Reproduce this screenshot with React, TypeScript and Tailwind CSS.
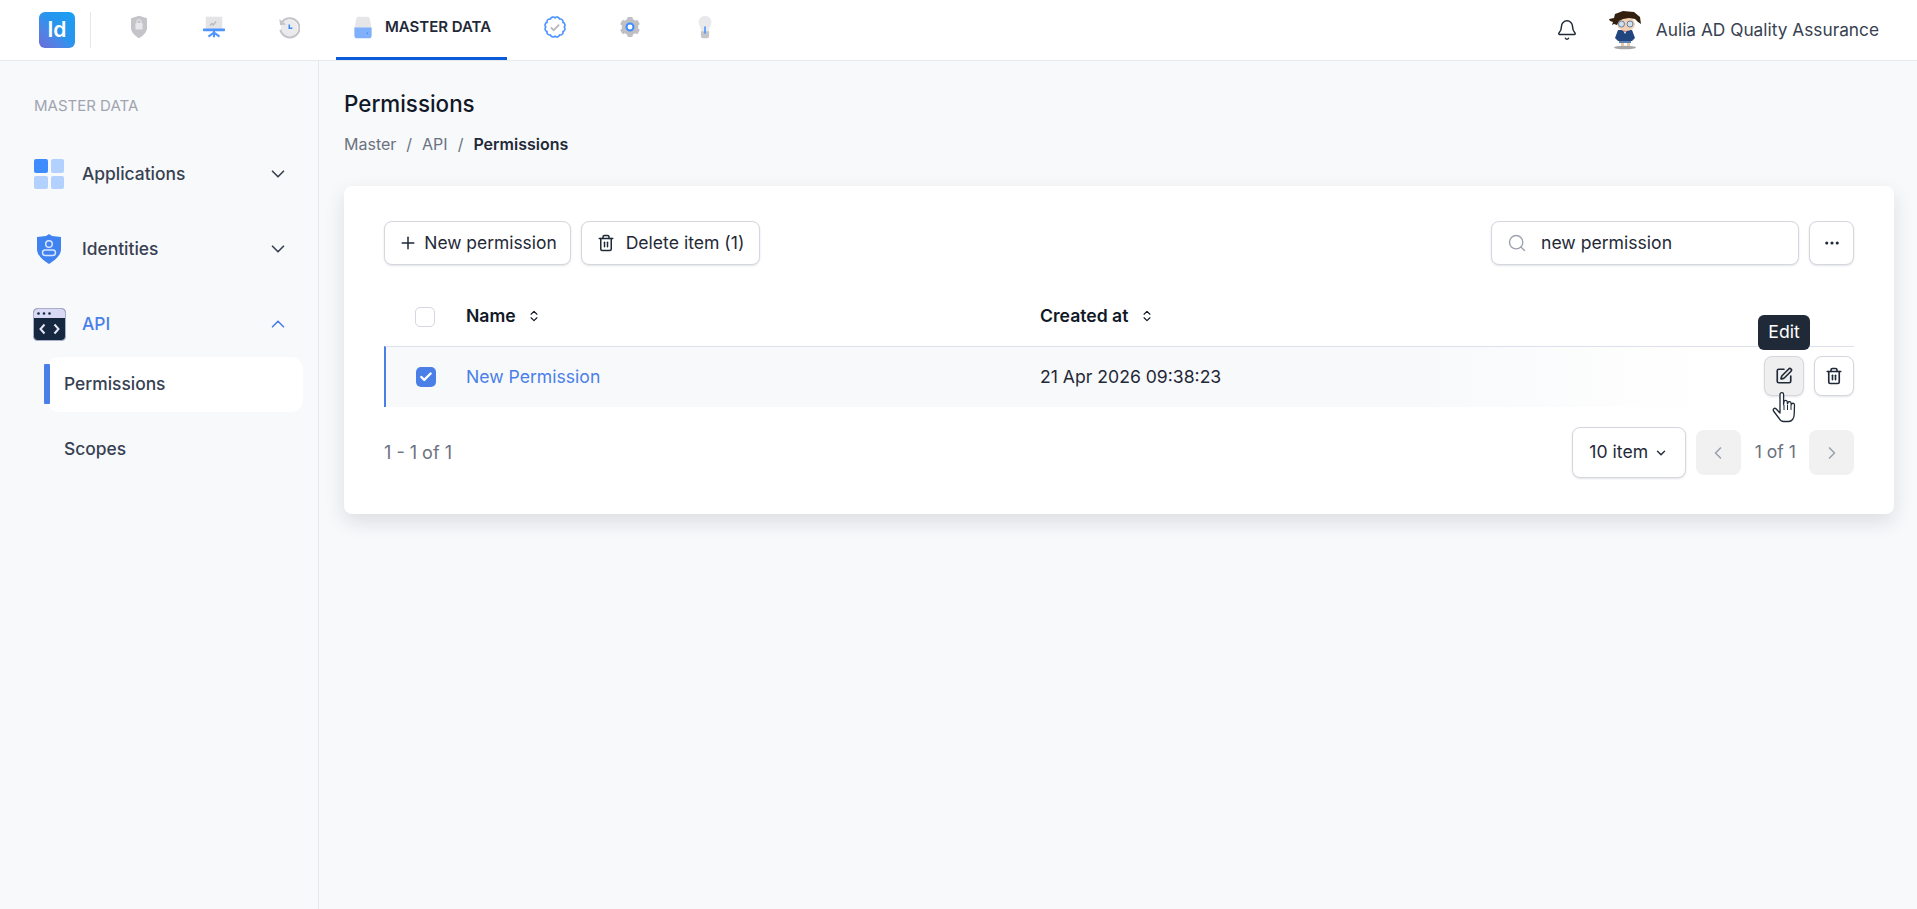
import { Bell, ChevronDown, ChevronLeft, ChevronRight, ChevronUp, ChevronsUpDown, Check, Ellipsis, Plus, Search, SquarePen, Trash2 } from "lucide-react";

function ShieldIcon() {
  return (
    <svg width="20" height="24" viewBox="0 0 24 30">
      <path d="M12 1 22 4v12c0 6-5 10-10 13C7 26 2 22 2 16V4z" fill="#c4c4c9" />
      <rect x="7.500" y="10" width="9" height="8" rx="1.500" fill="#e8e8ea" />
      <path d="M9.500 10V8.500a2.500 2.500 0 0 1 5 0V10" fill="none" stroke="#e8e8ea" strokeWidth="1.400" />
    </svg>
  );
}

function BoardIcon() {
  return (
    <svg width="22" height="22" viewBox="0 0 32 32">
      <rect x="4" y="1" width="24" height="18" fill="#e4e4e6" />
      <path d="M10 14l3-3 2 2 4-5" fill="none" stroke="#b9b9be" strokeWidth="2" />
      <rect x="0" y="18" width="32" height="4" rx="1" fill="#4c94ff" />
      <path d="M16 21v10M16 24l-8 6M16 24l8 6" stroke="#4c94ff" strokeWidth="3" fill="none" />
    </svg>
  );
}

function HistoryIcon() {
  return (
    <svg width="23" height="23" viewBox="0 0 30 30">
      <circle cx="16" cy="16" r="11" fill="#ebebed" />
      <path d="M6 9a12.500 12.500 0 1 1-1.500 9" fill="none" stroke="#c4c4c9" strokeWidth="2.800" />
      <path d="M3 4l1 8 8-1z" fill="#c4c4c9" />
      <path d="M16 11v5h4" fill="none" stroke="#3b87f5" strokeWidth="2" />
    </svg>
  );
}

function DriveIcon() {
  return (
    <svg width="22" height="23" viewBox="0 0 24 32">
      <path d="M6 1h12c2 0 3 1 3.500 3L24 18H0L2.500 4C3 2 4 1 6 1z" fill="#e6e6e8" />
      <path d="M0 16h24v11a4 4 0 0 1-4 4H4a4 4 0 0 1-4-4z" fill="#7fb0fb" />
      <circle cx="18" cy="24" r="1" fill="#3f7fe0" />
    </svg>
  );
}

function BadgeIcon() {
  return (
    <svg width="22" height="22" viewBox="0 0 24 24">
      <path d="M22 12A3 3 0 0 1 20.660 17A3 3 0 0 1 17 20.660A3 3 0 0 1 12 22A3 3 0 0 1 7 20.660A3 3 0 0 1 3.340 17A3 3 0 0 1 2 12A3 3 0 0 1 3.340 7A3 3 0 0 1 7 3.340A3 3 0 0 1 12 2A3 3 0 0 1 17 3.340A3 3 0 0 1 20.660 7A3 3 0 0 1 22 12z" fill="none" stroke="#4c94ff" strokeWidth="1.800" strokeLinejoin="round" />
      <path d="M7.500 12.500l3 3 6-6" fill="none" stroke="#b9b9be" strokeWidth="2" />
    </svg>
  );
}

function GearIcon() {
  return (
    <svg width="22" height="22" viewBox="0 0 24 24">
      <circle cx="12" cy="12" r="9" fill="#bfbfc4" />
      <rect x="9" y="1" width="6" height="22" rx="1.500" fill="#bfbfc4" />
      <rect x="9" y="1" width="6" height="22" rx="1.500" fill="#bfbfc4" transform="rotate(60 12 12)" />
      <rect x="9" y="1" width="6" height="22" rx="1.500" fill="#bfbfc4" transform="rotate(120 12 12)" />
      <circle cx="12" cy="12" r="3.800" fill="#fff" stroke="#3f8cff" strokeWidth="2.200" />
    </svg>
  );
}

function BulbIcon() {
  return (
    <svg width="18" height="24" viewBox="0 0 18 32">
      <path d="M9 1a8.500 8.500 0 0 1 8.500 8.500c0 4-3 6-3.500 12h-10C3.500 15.500.5 13.500.5 9.500A8.500 8.500 0 0 1 9 1z" fill="#e9e9eb" />
      <path d="M3.500 21.500h11V28a3 3 0 0 1-3 3h-5a3 3 0 0 1-3-3z" fill="#c4c4c9" />
      <rect x="8" y="15" width="2" height="10" rx="1" fill="#3f8cff" />
    </svg>
  );
}

function Avatar() {
  return (
    <svg width="36" height="40" viewBox="0 0 36 40">
      <ellipse cx="17" cy="37.500" rx="11" ry="1.800" fill="#a5a5a5" />
      <path d="M11 29h12v4H11z" fill="#5a7fae" />
      <rect x="13" y="33" width="3" height="3" fill="#e9c9a8" />
      <rect x="19" y="33" width="3" height="3" fill="#e9c9a8" />
      <path d="M10 20h14l3 8-3 3H10l-3-3z" fill="#21457f" />
      <path d="M15 20h4l-2 4z" fill="#fff" />
      <rect x="15.500" y="20" width="3" height="1.600" fill="#c22f2f" />
      <ellipse cx="18" cy="14" rx="9" ry="7" fill="#f3d2b3" />
      <circle cx="13.500" cy="14" r="3" fill="#cfe1ee" stroke="#4a6a8e" strokeWidth="0.800" />
      <circle cx="22" cy="14" r="3" fill="#cfe1ee" stroke="#4a6a8e" strokeWidth="0.800" />
      <path d="M1 9l5-1 1-4 8-3 11 1 6 5 1 7-3-2-3-3-6-1-6 1-4 2-2 4-3-1-2 1 1-3-3-1z" fill="#33200f" />
    </svg>
  );
}

function AppsIcon() {
  return (
    <div className="grid grid-cols-2 gap-[3px] w-[30px] h-[30px] shrink-0">
      <div className="rounded-[2px] bg-[#3f8cff]" />
      <div className="rounded-[2px] bg-[#b3d1fe]" />
      <div className="rounded-[2px] bg-[#b3d1fe]" />
      <div className="rounded-[2px] bg-[#b3d1fe]" />
    </div>
  );
}

function IdentityIcon() {
  return (
    <svg width="30" height="30" viewBox="0 0 30 30" className="shrink-0">
      <path d="M15 0l3 2 9 1v12c0 7-7 12-12 15C10 27 3 22 3 15V3l9-1z" fill="#3f82f0" />
      <circle cx="15" cy="10" r="3.300" fill="none" stroke="#d6e6ff" strokeWidth="1.500" />
      <rect x="8.500" y="16" width="13" height="5.500" rx="2.700" fill="none" stroke="#d6e6ff" strokeWidth="1.500" />
    </svg>
  );
}

function ApiIcon() {
  return (
    <svg width="33" height="33" viewBox="0 0 33 33" className="shrink-0">
      <rect x="0.500" y="0.500" width="32" height="32" rx="4" fill="#16283f" stroke="#a9aecb" />
      <path d="M1 10V4.500A3.500 3.500 0 0 1 4.500 1h24A3.500 3.500 0 0 1 32 4.500V10z" fill="#d9d9f6" />
      <circle cx="5.500" cy="5.500" r="1.300" fill="#16283f" />
      <circle cx="11" cy="5.500" r="1.300" fill="#16283f" />
      <circle cx="16.500" cy="5.500" r="1.300" fill="#16283f" />
      <path d="M11.500 16.500l-4 4.500 4 4.500M21.500 16.500l4 4.500-4 4.500" fill="none" stroke="#e6e6f8" strokeWidth="2" />
    </svg>
  );
}

function HandCursor() {
  return (
    <svg width="24" height="32" viewBox="0 0 24 32">
      <path d="M8 2.500a1.800 1.800 0 0 1 3.600 0v10l.4-3a1.700 1.700 0 0 1 3.300.4l.2 2 .5-1.400a1.600 1.600 0 0 1 3 .6l.3 1.400.5-.6a1.500 1.500 0 0 1 2.700.8l-.3 9.800c0 4-2.500 7-5.500 7h-5c-2 0-3.500-1-4.500-3L1.500 19c-1-2 1-3.500 2.500-2.300L8 21z" fill="#fff" stroke="#1f2937" strokeWidth="1.300" strokeLinejoin="round" />
      <path d="M12 13v5M15.500 13v5M19 13v5" stroke="#1f2937" strokeWidth="1" />
    </svg>
  );
}

const navItems = [
  { key: "security", icon: <ShieldIcon /> },
  { key: "monitor", icon: <BoardIcon /> },
  { key: "history", icon: <HistoryIcon /> },
];

const navItemsRight = [
  { key: "approval", icon: <BadgeIcon /> },
  { key: "settings", icon: <GearIcon /> },
  { key: "ideas", icon: <BulbIcon /> },
];

const outlineButton = "flex items-center justify-center bg-white border border-[#d5d7e0] rounded-lg shadow-[0_1px_2px_rgba(16,24,40,0.12)] text-[#1f2937]";

export default function App() {
  return (
    <div className="h-[909px] overflow-hidden flex flex-col bg-[#f8f9fb] font-['Inter',sans-serif] text-[#1f2937]">
      <header className="h-[61px] shrink-0 flex items-center bg-white border-b border-[#e8e9ec]">
        <div className="ml-[39px] w-9 h-9 rounded-md bg-gradient-to-tr from-[#6a6bd8] via-[#2a93ee] to-[#16a0f2] flex items-center justify-center text-white font-semibold text-[21px]">
          Id
        </div>
        <div className="ml-[15px] mr-[10px] w-px h-9 bg-[#e5e7eb]" />
        {navItems.map((item) => (
          <div key={item.key} className="w-[75px] h-full flex items-center justify-center pb-[6px]">
            {item.icon}
          </div>
        ))}
        <div className="mx-[10px] w-[171px] h-full flex items-center justify-center gap-[11px] border-b-[3px] border-[#0b5ad9] pb-[3px]">
          <DriveIcon />
          <span className="text-[15px] font-semibold text-[#1f2937]">MASTER DATA</span>
        </div>
        {navItemsRight.map((item) => (
          <div key={item.key} className="w-[75px] h-full flex items-center justify-center pb-[6px]">
            {item.icon}
          </div>
        ))}
        <div className="ml-auto flex items-center mr-[38px]">
          <Bell size={22} strokeWidth={1.6} className="text-[#1f2937]" />
          <div className="ml-[30px] mr-[12px]">
            <Avatar />
          </div>
          <span className="text-[17.3px] text-[#374151]">Aulia AD Quality Assurance</span>
        </div>
      </header>

      <div className="flex flex-1 min-h-0">
        <aside className="w-[319px] shrink-0 border-r border-[#e5e7eb] pl-[34px] pt-[37px]">
          <p className="text-[15px] leading-[16px] text-[#a0a4b0]">MASTER DATA</p>
          <div className="mt-[45px] flex items-center h-[30px]">
            <AppsIcon />
            <span className="ml-[18px] text-[17.4px] font-medium text-[#374151]">Applications</span>
            <ChevronDown size={22} strokeWidth={1.8} className="ml-auto mr-[29px] text-[#374151]" />
          </div>
          <div className="mt-[45px] flex items-center h-[30px]">
            <IdentityIcon />
            <span className="ml-[18px] text-[17.4px] font-medium text-[#374151]">Identities</span>
            <ChevronDown size={22} strokeWidth={1.8} className="ml-auto mr-[29px] text-[#374151]" />
          </div>
          <div className="mt-[45px] flex items-center h-[30px] -ml-px">
            <ApiIcon />
            <span className="ml-[16px] text-[17.4px] font-medium text-[#4a7fe8]">API</span>
            <ChevronUp size={22} strokeWidth={1.8} className="ml-auto mr-[29px] text-[#4a7fe8]" />
          </div>
          <div className="relative mt-[18px] ml-[13px] mr-[15px] h-[55px] rounded-xl bg-white flex items-center pl-[17px]">
            <div className="absolute -left-[3px] top-[7px] w-[6px] h-10 rounded-[1px] bg-[#4a7fe8]" />
            <span className="text-[17.4px] font-medium text-[#374151]">Permissions</span>
          </div>
          <div className="mt-[10px] ml-[30px] h-[55px] flex items-center">
            <span className="text-[17.4px] font-medium text-[#374151]">Scopes</span>
          </div>
        </aside>

        <main className="flex-1 pl-[25px] pr-[23px]">
          <h1 className="mt-[28px] text-[22.4px] leading-[30px] font-medium text-[#111827]">Permissions</h1>
          <div className="mt-[15px] flex items-center text-[16px] leading-[20px] text-[#6b7280] gap-[10px]">
            <span>Master</span>
            <span>/</span>
            <span>API</span>
            <span>/</span>
            <span className="font-semibold text-[#1f2937]">Permissions</span>
          </div>

          <section className="mt-[32px] h-[328px] bg-white rounded-lg shadow-[0_8px_20px_rgba(17,24,39,0.12)] pl-[40px] pr-[40px] pt-[35px]">
            <div className="flex items-center">
              <button className={`${outlineButton} w-[187px] h-[44px] gap-[6px] text-[17.4px]`}>
                <Plus size={20} strokeWidth={1.8} />
                New permission
              </button>
              <button className={`${outlineButton} ml-[10px] w-[179px] h-[44px] gap-[11px] text-[17.6px]`}>
                <Trash2 size={18} strokeWidth={2} />
                Delete item (1)
              </button>
              <div className={`${outlineButton} ml-auto w-[308px] h-[44px] !justify-start pl-[15px] gap-[14px] text-[17.6px]`}>
                <Search size={20} strokeWidth={1.7} className="text-[#9ca3af]" />
                new permission
              </div>
              <button className={`${outlineButton} ml-[10px] w-[45px] h-[44px]`}>
                <Ellipsis size={18} strokeWidth={2.2} />
              </button>
            </div>

            <div className="mt-[27px] h-[54px] grid grid-cols-[82px_574px_1fr] items-center pb-[5px]">
              <div className="pl-[31px]">
                <div className="w-5 h-5 rounded-[5px] border border-[#d5d7e0] bg-white" />
              </div>
              <div className="flex items-center gap-[11px] text-[17.6px] font-semibold text-[#111827]">
                Name
                <ChevronsUpDown size={14} strokeWidth={2} />
              </div>
              <div className="flex items-center gap-[12px] text-[17.6px] font-semibold text-[#111827]">
                Created at
                <ChevronsUpDown size={14} strokeWidth={2} />
              </div>
            </div>

            <div className="h-[61px] grid grid-cols-[80px_574px_1fr] items-center border-t border-[#dde0ea] border-l-2 border-l-[#4a7fe8] bg-gradient-to-r from-[#f8f9fb] from-[70%] to-white to-[90%]">
              <div className="pl-[30px]">
                <div className="w-5 h-5 rounded-[5px] bg-[#4a7fe8] flex items-center justify-center">
                  <Check size={14} strokeWidth={4} className="text-white" />
                </div>
              </div>
              <div className="text-[17.6px] text-[#4a7fe8]">New Permission</div>
              <div className="flex items-center">
                <span className="text-[17.6px] text-[#1f2937]">21 Apr 2026 09:38:23</span>
                <div className="ml-auto flex items-center gap-[10px] pb-[2px]">
                  <div className={`${outlineButton} relative w-10 h-10 !bg-[#efeff0]`}>
                    <SquarePen size={18} strokeWidth={2.2} />
                    <div className="absolute -top-[42px] left-1/2 -translate-x-1/2 w-[52px] h-[35px] rounded-md bg-[#1f2937] text-white text-[17.6px] flex items-center justify-center">
                      Edit
                    </div>
                    <div className="absolute left-[7px] top-[35px]">
                      <HandCursor />
                    </div>
                  </div>
                  <div className={`${outlineButton} w-10 h-10`}>
                    <Trash2 size={18} strokeWidth={2.2} />
                  </div>
                </div>
              </div>
            </div>

            <div className="mt-[20px] flex items-center">
              <span className="text-[18px] text-[#6b7280]">1 - 1 of 1</span>
              <button className={`${outlineButton} ml-auto w-[114px] h-[51px] gap-[6px] text-[17.6px]`}>
                10 item
                <ChevronDown size={14} strokeWidth={2.4} />
              </button>
              <div className="ml-[10px] w-[45px] h-[45px] rounded-lg bg-[#f1f1f2] flex items-center justify-center text-[#9ca3af]">
                <ChevronLeft size={20} />
              </div>
              <span className="ml-[14px] mr-[13px] text-[17.6px] text-[#6b7280]">1 of 1</span>
              <div className="w-[45px] h-[45px] rounded-lg bg-[#f1f1f2] flex items-center justify-center text-[#9ca3af]">
                <ChevronRight size={20} />
              </div>
            </div>
          </section>
        </main>
      </div>
    </div>
  );
}
